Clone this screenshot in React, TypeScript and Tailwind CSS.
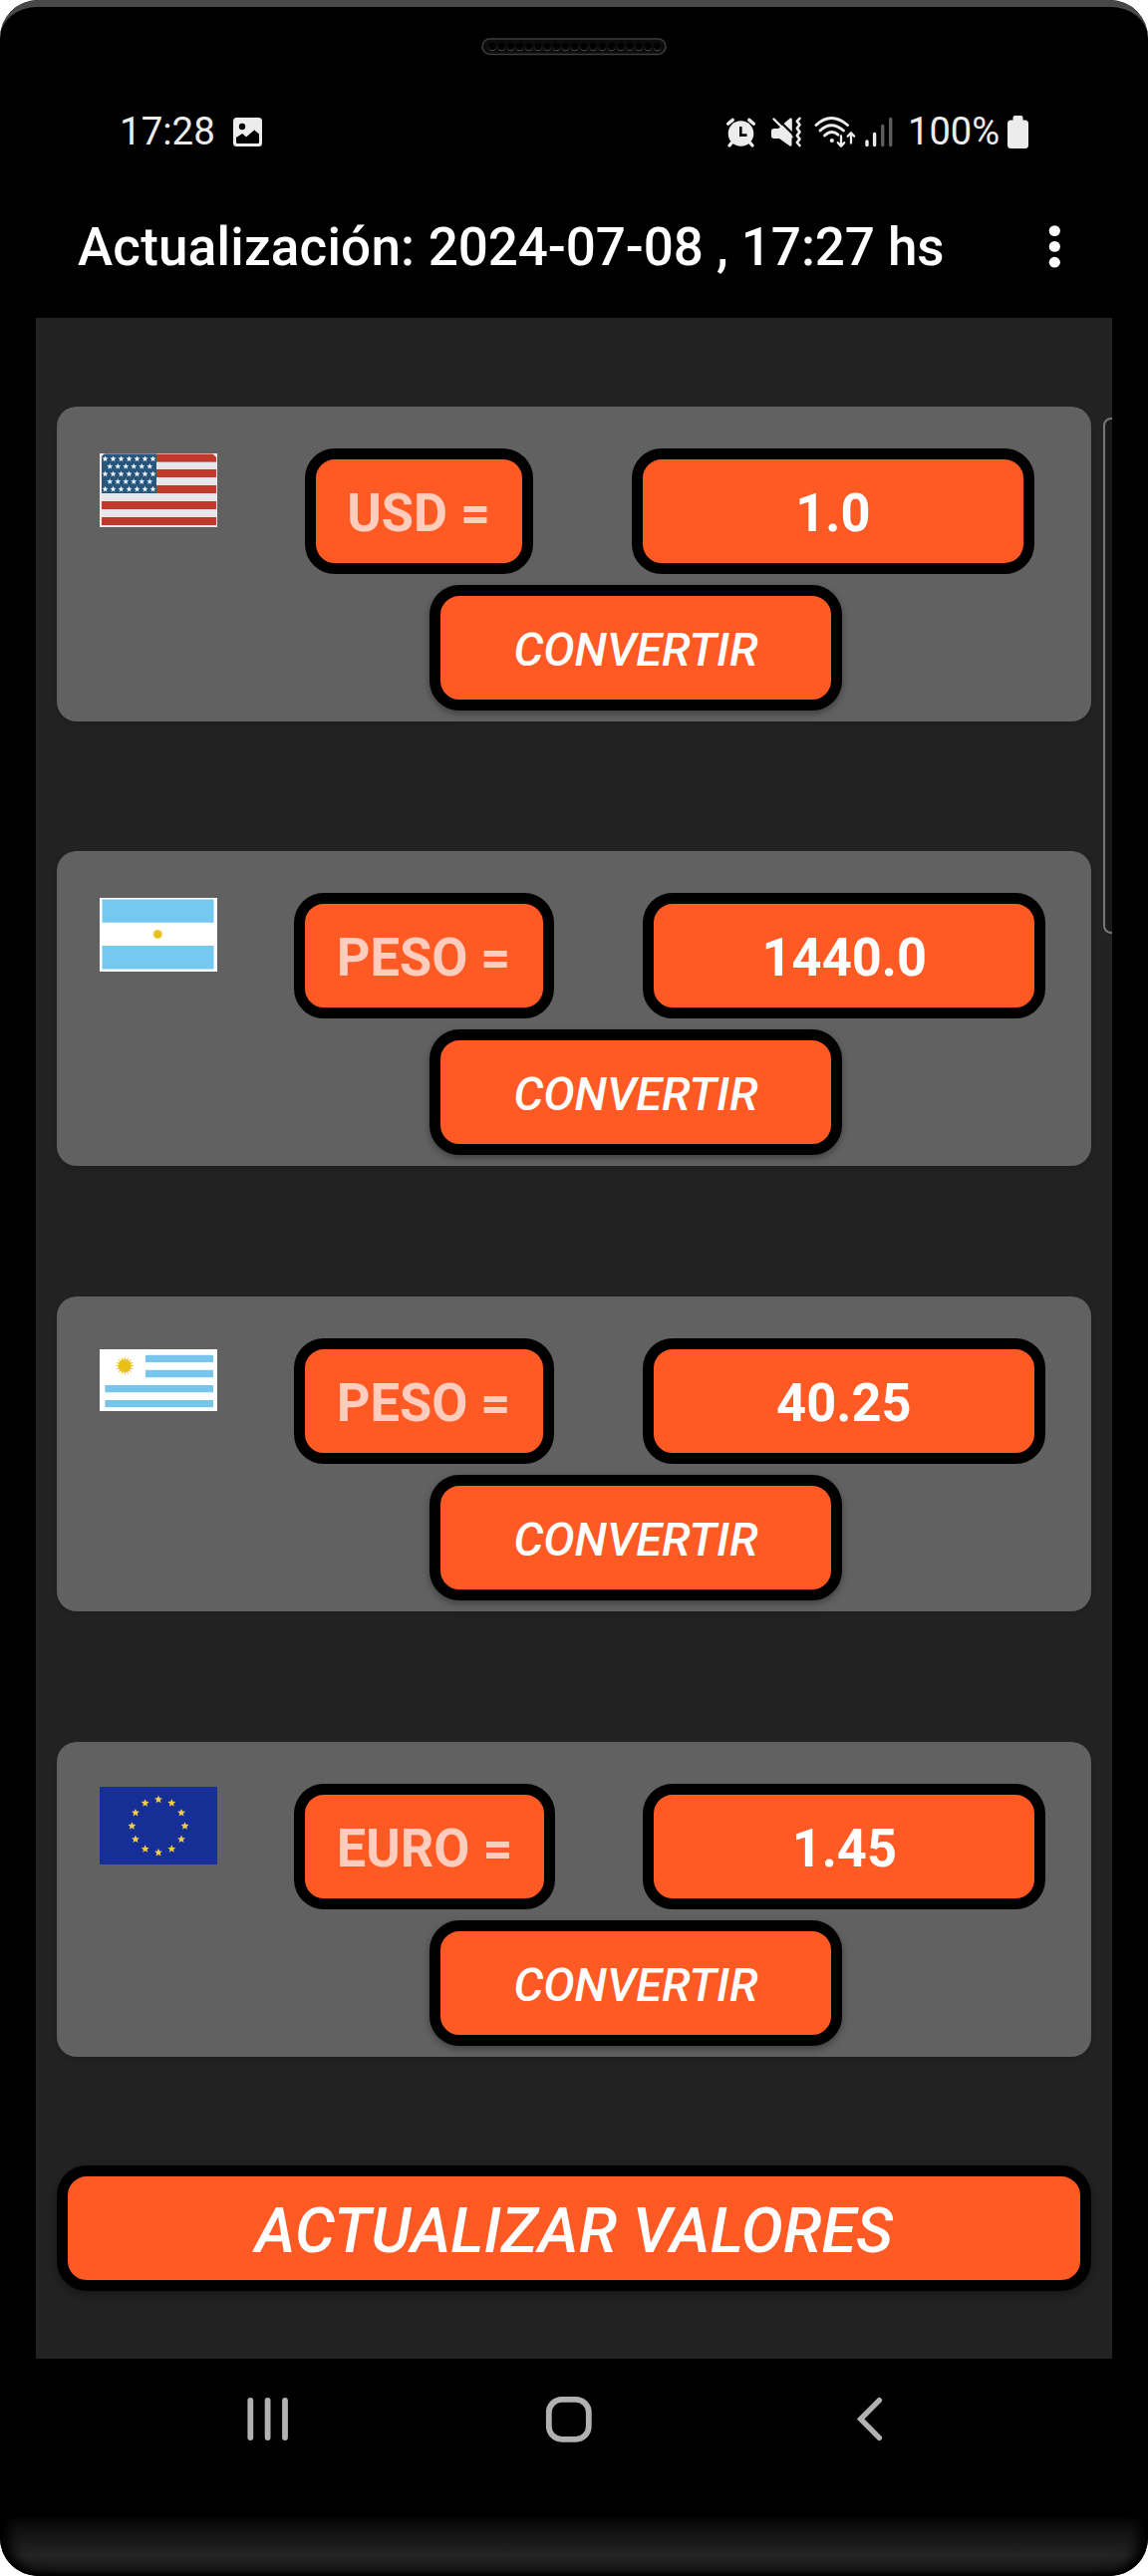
import React from "react";

const ROBOTO = "font-['Roboto',sans-serif]";

function starPoints(cx: number, cy: number, r: number): string {
  const pts: string[] = [];
  for (let i = 0; i < 10; i++) {
    const rad = i % 2 === 0 ? r : r * 0.45;
    const a = -Math.PI / 2 + (i * Math.PI) / 5;
    pts.push(`${(cx + rad * Math.cos(a)).toFixed(2)},${(cy + rad * Math.sin(a)).toFixed(2)}`);
  }
  return pts.join(" ");
}

function sunPoints(cx: number, cy: number, outer: number, inner: number, rays: number): string {
  const pts: string[] = [];
  for (let i = 0; i < rays * 2; i++) {
    const rad = i % 2 === 0 ? outer : inner;
    const a = -Math.PI / 2 + (i * Math.PI) / rays;
    pts.push(`${(cx + rad * Math.cos(a)).toFixed(2)},${(cy + rad * Math.sin(a)).toFixed(2)}`);
  }
  return pts.join(" ");
}

function UsaFlag() {
  const stars: [number, number][] = [];
  for (let row = 0; row < 5; row++) {
    const odd = row % 2 === 1;
    for (let i = 0; i < (odd ? 6 : 7); i++) {
      stars.push([(odd ? 10.2 : 5.5) + i * 8, 5.5 + row * 7.6]);
    }
  }
  return (
    <svg width="118" height="74" viewBox="0 0 118 74">
      <rect width="118" height="74" fill="#f3e9e6" />
      <rect x="2" y="1" width="115" height="71" fill="#e6e7ec" />
      {[0.6, 16, 32, 48, 64].map((y) => (
        <rect key={y} x="2" y={y} width="115" height="8" fill="#c03a2b" />
      ))}
      <rect x="2" y="0.6" width="55" height="39.4" fill="#29567d" />
      {stars.map(([x, y], i) => (
        <polygon key={i} points={starPoints(x, y, 3.1)} fill="#e8f2f8" />
      ))}
      <path d="M0 0H5L2 3V74H0ZM118 0H113L117 4V74H118Z" fill="#f3e9e6" />
    </svg>
  );
}

function ArgentinaFlag() {
  return (
    <svg width="118" height="74" viewBox="0 0 118 74">
      <rect width="118" height="74" fill="#fff" />
      <rect x="2.5" y="1.5" width="112" height="23.3" fill="#75c8f0" />
      <rect x="2.5" y="48" width="112" height="23.5" fill="#75c8f0" />
      <circle cx="58.3" cy="36.5" r="4.8" fill="#f3dc83" />
      <circle cx="58.3" cy="36.5" r="3.7" fill="#e8c018" />
    </svg>
  );
}

function UruguayFlag() {
  return (
    <svg width="118" height="62" viewBox="0 0 118 62">
      <rect width="118" height="62" fill="#fff" />
      <g fill="#75c5ec">
        <rect x="46" y="5.8" width="68" height="7.2" />
        <rect x="46" y="20.8" width="68" height="7.4" />
        <rect x="5.4" y="36" width="108.6" height="7.2" />
        <rect x="5.4" y="51" width="108.6" height="7.2" />
      </g>
      <polygon points={sunPoints(25.2, 16.6, 9.6, 5.6, 16)} fill="#ecc53c" />
      <circle cx="25.2" cy="16.6" r="6.3" fill="#e8c018" />
    </svg>
  );
}

function EuropeFlag() {
  return (
    <svg width="118" height="78" viewBox="0 0 118 78">
      <rect width="118" height="78" fill="#152f97" />
      {Array.from({ length: 12 }, (_, i) => {
        const a = (i * Math.PI) / 6;
        return (
          <polygon
            key={i}
            points={starPoints(59 + 26.6 * Math.sin(a), 39.4 - 26.6 * Math.cos(a), 4.2)}
            fill="#f4cc48"
          />
        );
      })}
    </svg>
  );
}

function StatusIcons() {
  return (
    <svg width="172" height="40" viewBox="0 0 172 40" fill="none" stroke="#ececec">
      {/* alarm clock */}
      <circle cx="15.5" cy="24" r="12.8" fill="#ececec" stroke="none" />
      <path d="M2.6 14.2L7.2 10.4M28.4 14.2L23.8 10.4" strokeWidth="3.4" strokeLinecap="round" />
      <path d="M6.5 33L4 36M24.5 33L27 36" strokeWidth="3.4" strokeLinecap="round" />
      <path d="M15.3 17V25.6H21.5" stroke="#000" strokeWidth="2.6" />
      {/* muted speaker with vibration */}
      <path
        d="M46 21.5C46 20 47 19 48.5 19H53L57 15.5L66.5 25V35.5Q66 37.5 64.5 36.5L54 29H48.5C47 29 46 28 46 26.5Z"
        fill="#ececec"
        stroke="none"
      />
      <path d="M58.5 14L65 8.6Q66.8 7.8 66.8 10V22Z" fill="#ececec" stroke="none" />
      <path d="M48.5 9.5L66.5 27.5" strokeWidth="2.4" strokeLinecap="round" />
      <path
        d="M74.5 8.8L71.8 11.6L74.5 15.2L71.8 18.8L74.5 22.4L71.8 26L74.5 29.6L71.8 33L74.5 36"
        strokeWidth="2.6"
        strokeLinecap="round"
        strokeLinejoin="round"
      />
      {/* wifi with traffic arrows */}
      <g strokeWidth="2.9" strokeLinecap="round">
        <path d="M91 15.5Q106 1.5 122.5 15.5" />
        <path d="M95 21Q106 10.5 118.5 21" />
        <path d="M99.5 26Q106.5 19.5 113 25.2" />
      </g>
      <circle cx="106.8" cy="31" r="2.1" fill="#ececec" stroke="none" />
      <g strokeWidth="2.3" strokeLinecap="round" strokeLinejoin="round">
        <path d="M116 26.5V36M112.8 33.2L116 36.7L119.2 33.2" />
        <path d="M126 33.5V24M122.7 26.7L126 23.3L129.2 26.7" />
      </g>
      {/* signal strength */}
      <g strokeWidth="3.4" strokeLinecap="round">
        <path d="M142 32V35.5M149.6 24.5V35.5" />
        <path d="M157.7 16.5V35.5M165.7 9.5V35.5" stroke="#5c5c5c" />
      </g>
    </svg>
  );
}

function StatusBar() {
  return (
    <div className="flex h-[62px] items-center pl-[120px] text-[38.5px] leading-[46px] text-[#ececec]">
      <div className="w-[114px] whitespace-nowrap">17:28</div>
      <svg width="29" height="29" viewBox="0 0 29 29">
        <rect width="29" height="29" rx="3.5" fill="#ececec" />
        <circle cx="9" cy="9" r="3.2" fill="#000" />
        <path d="M3 20L9.2 16L13 19.6L21.2 12.4L26 16.6V24.5Q26 26 24.5 26H4.5Q3 26 3 24.5Z" fill="#000" />
      </svg>
      <div className="mb-1 ml-[465px] h-10">
        <StatusIcons />
      </div>
      <div className="ml-[11px] w-[100px] whitespace-nowrap">
        <span className="inline-block origin-left scale-x-[0.99]">100%</span>
      </div>
      <svg width="21" height="33" viewBox="0 0 21 33" fill="#ececec">
        <rect x="5.5" y="0" width="10" height="10" rx="2" />
        <rect y="4.5" width="21" height="28.5" rx="3.5" />
      </svg>
    </div>
  );
}

function Speaker() {
  return (
    <svg className="mx-auto" width="186" height="18" viewBox="0 0 186 18">
      <rect x="1" y="1" width="184" height="15.5" rx="7.7" fill="#0c0c0c" stroke="#3c3c3c" strokeWidth="1.6" />
      {Array.from({ length: 19 }, (_, i) => (
        <g key={i}>
          <circle cx={11 + i * 9.2} cy="9.6" r="3.6" fill="#4a4a4a" />
          <circle cx={11 + i * 9.2} cy="8.5" r="3.7" fill="#020202" />
        </g>
      ))}
    </svg>
  );
}

const box =
  "flex h-[126px] items-center justify-center rounded-[30px] border-[11px] border-black bg-[#ff5924] whitespace-nowrap";

interface Currency {
  label: string;
  value: string;
  flag: React.ReactNode;
  cardClass: string;
  labelClass: string;
  valueClass: string;
}

const currencies: Currency[] = [
  { label: "USD =", value: "1.0", flag: <UsaFlag />, cardClass: "", labelClass: "ml-[88px] w-[229px]", valueClass: "ml-[99px]" },
  { label: "PESO =", value: "1440.0", flag: <ArgentinaFlag />, cardClass: "mt-[130px]", labelClass: "ml-[77px] w-[261px]", valueClass: "ml-[89px]" },
  { label: "PESO =", value: "40.25", flag: <UruguayFlag />, cardClass: "mt-[131px]", labelClass: "ml-[77px] w-[261px]", valueClass: "ml-[89px]" },
  { label: "EURO =", value: "1.45", flag: <EuropeFlag />, cardClass: "mt-[131px]", labelClass: "ml-[77px] w-[262px]", valueClass: "ml-[88px]" },
];

function CurrencyCard({ item }: { item: Currency }) {
  return (
    <section className={`${item.cardClass} h-[316px] rounded-[20px] bg-[#616161] pt-[42px] shadow-[0_2px_4px_rgba(0,0,0,0.15)]`}>
      <div className="flex pl-[43px]">
        <div className="flex h-[84px] w-[118px] items-center">{item.flag}</div>
        <div className={`${box} ${item.labelClass} pt-[3px] text-[54px] font-bold text-white/70`}>
          <span className="inline-block scale-x-[0.97]">{item.label}</span>
        </div>
        <div className={`${box} ${item.valueClass} w-[404px] pt-[3px] text-[54px] font-bold text-white`}>
          <span className="inline-block scale-x-[0.97]">{item.value}</span>
        </div>
      </div>
      <button
        className={`${box} mt-[11px] ml-[374px] w-[414px] pt-[4px] text-[47px] font-medium text-white italic shadow-[0_3px_7px_rgba(0,0,0,0.35)]`}
      >
        <span>CONVERTIR</span>
      </button>
    </section>
  );
}

function NavBar() {
  return (
    <nav className="flex h-[160px] items-start pt-[36px] pl-[245px]">
      <svg width="48" height="50" viewBox="0 0 48 50" stroke="#b1b1b1" strokeWidth="5.8" strokeLinecap="round">
        <path d="M6.3 6V43M23.6 6V43M41 6V43" />
      </svg>
      <svg className="ml-[252px]" width="52" height="50" viewBox="0 0 52 50" fill="none" stroke="#b1b1b1" strokeWidth="5.8">
        <rect x="5.8" y="4.8" width="40" height="40" rx="13" />
      </svg>
      <svg
        className="ml-[261px]"
        width="32"
        height="50"
        viewBox="0 0 32 50"
        fill="none"
        stroke="#b1b1b1"
        strokeWidth="5.4"
        strokeLinecap="round"
      >
        <path d="M24.4 5.6L5.6 24.5L24.4 43.4" />
      </svg>
    </nav>
  );
}

export default function App() {
  return (
    <div className={`${ROBOTO} h-[2585px] w-[1152px] bg-white`}>
      <div className="flex h-full flex-col overflow-hidden rounded-[38px] bg-black">
        <div className="h-[38px] shrink-0 rounded-t-[38px] border-t-[7px] border-[#484848]" />
        <div className="h-[63px] shrink-0">
          <Speaker />
        </div>
        <StatusBar />
        <header className="flex h-[156px] items-center pt-[13px] pl-[78px] text-white">
          <h1 className="w-[969px] text-[53px] leading-[64px] font-medium whitespace-nowrap">
            <span className="tracking-[0.2px]">Actualización: </span>
            <span className="tracking-[-0.08px]">2024-07-08 , 17:27 hs</span>
          </h1>
          <svg width="24" height="48" viewBox="0 0 24 48" fill="#fff">
            <ellipse cx="11.3" cy="7.6" rx="5.6" ry="5.4" />
            <ellipse cx="11.3" cy="23.4" rx="5.6" ry="5.4" />
            <ellipse cx="11.3" cy="39.2" rx="5.6" ry="5.4" />
          </svg>
        </header>
        <main className="relative mx-9 h-[2048px] shrink-0 overflow-hidden bg-[#222222] px-[21px] pt-[89px]">
          <div className="flex flex-col">
            {currencies.map((item, i) => (
              <CurrencyCard key={i} item={item} />
            ))}
          </div>
          <button
            className={`${box} mt-[109px] w-full pt-[6px] text-[63px] font-medium tracking-[0.08px] text-white italic shadow-[0_4px_8px_rgba(0,0,0,0.3)]`}
          >
            <span>ACTUALIZAR VALORES</span>
          </button>
          <div className="absolute top-[100px] -right-[8px] h-[518px] w-[17px] rounded-[8px] border-2 border-[#777777] bg-[#1a1a1a]" />
        </main>
        <NavBar />
        <div className="h-[58px] shrink-0 rounded-b-[38px] bg-linear-to-b from-[#090909] via-[#242424] via-65% to-[#101010] shadow-[inset_14px_0_12px_-4px_#000,inset_-14px_0_12px_-4px_#000,inset_0_-3px_4px_#000]" />
      </div>
    </div>
  );
}
